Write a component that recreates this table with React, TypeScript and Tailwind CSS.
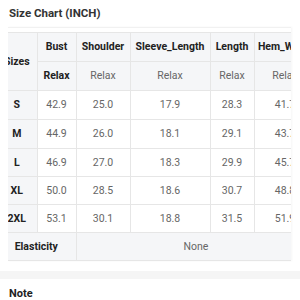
import React from "react";

interface SizeRow {
  size: string;
  bust: string;
  shoulder: string;
  sleeve: string;
  length: string;
  hem: string;
  h: string;
}

const rows: SizeRow[] = [
  { size: "S", bust: "42.9", shoulder: "25.0", sleeve: "17.9", length: "28.3", hem: "41.7", h: "h-[29px]" },
  { size: "M", bust: "44.9", shoulder: "26.0", sleeve: "18.1", length: "29.1", hem: "43.7", h: "h-[29px]" },
  { size: "L", bust: "46.9", shoulder: "27.0", sleeve: "18.3", length: "29.9", hem: "45.7", h: "h-[28px]" },
  { size: "XL", bust: "50.0", shoulder: "28.5", sleeve: "18.6", length: "30.7", hem: "48.8", h: "h-[28px]" },
  { size: "2XL", bust: "53.1", shoulder: "30.1", sleeve: "18.8", length: "31.5", hem: "51.9", h: "h-[28px]" },
];

const cell = "border border-[#e6e6e6] p-0 text-center align-middle whitespace-nowrap";

export default function App() {
  return (
    <div className="w-[300px] h-[300px] overflow-hidden bg-white font-['Roboto',sans-serif] text-[10.5px]">
      {/* Title */}
      <h2 className="pl-[9px] pt-[5px] h-[27px] text-[11.5px] font-bold text-[#333]">Size Chart (INCH)</h2>

      {/* Table, scrolled sideways */}
      <div className="ml-2 w-[283px] overflow-hidden border-t border-[#f1f1f1] pt-[4px] shadow-[1px_0_2px_rgba(0,0,0,0.04)]">
        <table className="-ml-[11px] border-collapse table-fixed w-[319px]">
          <colgroup>
            <col className="w-[40px]" />
            <col className="w-[39px]" />
            <col className="w-[54px]" />
            <col className="w-[80px]" />
            <col className="w-[44px]" />
            <col className="w-[62px]" />
          </colgroup>
          <thead>
            <tr className="h-[29px] bg-[#f5f6f8] text-[#222] font-bold">
              <th rowSpan={2} className={`${cell} border-l-0`}>Sizes</th>
              <th className={cell}>Bust</th>
              <th className={cell}>Shoulder</th>
              <th className={cell}>Sleeve_Length</th>
              <th className={cell}>Length</th>
              <th className={cell}>Hem_Width</th>
            </tr>
            <tr className="h-[29px] bg-[#f5f6f8]">
              <th className={`${cell} font-bold text-[#222]`}>Relax</th>
              <th className={`${cell} font-normal text-[#666]`}>Relax</th>
              <th className={`${cell} font-normal text-[#666]`}>Relax</th>
              <th className={`${cell} font-normal text-[#666]`}>Relax</th>
              <th className={`${cell} font-normal text-[#666]`}>Relax</th>
            </tr>
          </thead>
          <tbody className="text-[#666]">
            {rows.map((r) => (
              <tr key={r.size} className={r.h}>
                <td className={`${cell} border-l-0 bg-[#f5f6f8] font-bold text-[#222]`}>{r.size}</td>
                <td className={cell}>{r.bust}</td>
                <td className={cell}>{r.shoulder}</td>
                <td className={cell}>{r.sleeve}</td>
                <td className={cell}>{r.length}</td>
                <td className={cell}>{r.hem}</td>
              </tr>
            ))}
            <tr className="h-[28px] bg-[#f5f6f8]">
              <td colSpan={2} className={`${cell} border-l-0 font-bold text-[#222]`}>Elasticity</td>
              <td colSpan={4} className={cell}>None</td>
            </tr>
          </tbody>
        </table>
      </div>

      {/* Separator band */}
      <div className="mt-[10px] h-[8px] bg-[#f5f5f5]" />

      {/* Note */}
      <h3 className="pl-[9px] pt-[7px] text-[11px] font-bold text-[#222]">Note</h3>
    </div>
  );
}
